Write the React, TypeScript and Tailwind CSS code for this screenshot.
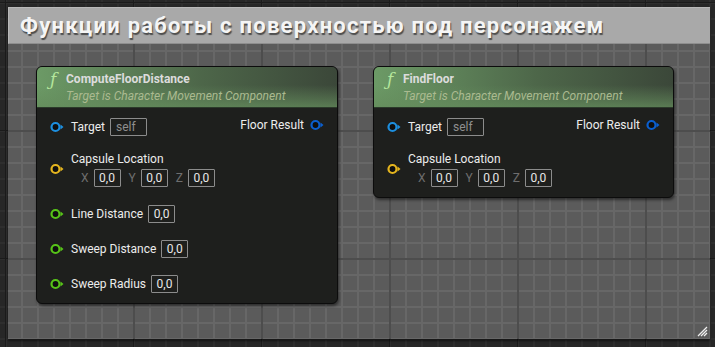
import React from "react";

// --- pins ---
const Pin: React.FC<{ color: string }> = ({ color }) => (
  <svg width="14" height="12" viewBox="0 0 14 12" className="shrink-0">
    <circle cx="5.5" cy="6" r="4" fill="#0f0f0f" stroke={color} strokeWidth="2.2" />
    <polygon points="10.5,3.5 13.5,6 10.5,8.5" fill={color} />
  </svg>
);

const ValueBox: React.FC<{ value: string; wide?: boolean }> = ({ value, wide }) => (
  <span
    className={`inline-flex items-center justify-center h-[18px] border border-[#8c8c8c] rounded-[1px] text-[12px] ${
      wide ? "w-[37px] justify-start pl-[5px] text-[#8f8f8f]" : "w-[27px] text-[#e8e8e8]"
    }`}
  >
    {value}
  </span>
);

const VectorInput = () => (
  <div className="flex items-center gap-[5px] pl-[11px] text-[12px] text-[#6e6e6e]">
    <span>X</span>
    <ValueBox value="0,0" />
    <span className="ml-[3px]">Y</span>
    <ValueBox value="0,0" />
    <span className="ml-[3px]">Z</span>
    <ValueBox value="0,0" />
  </div>
);

const FloatRow: React.FC<{ label: string }> = ({ label }) => (
  <div className="flex items-center h-[35px]">
    <Pin color="#57c418" />
    <span className="ml-[7px] mr-[5px]">{label}</span>
    <ValueBox value="0,0" />
  </div>
);

interface NodeProps {
  title: string;
  width: string;
  extraPins?: boolean;
}

const FunctionNode: React.FC<NodeProps> = ({ title, width, extraPins }) => (
  <div
    className={`${width} rounded-[6px] border border-[#0c0c0c] bg-[#1e1f1d] shadow-[1px_2px_3px_rgba(0,0,0,0.5)] overflow-hidden`}
  >
    <div className="h-[41px] pl-[12px] pt-[3px] bg-[linear-gradient(to_bottom,rgba(0,0,0,0)_45%,rgba(100,140,92,0.75)),linear-gradient(to_right,#6c9a66,#4d6649_55%,#3b4739)] border-b border-[#2b3a2a]">
      <div className="flex items-center h-[18px]">
        <span className="w-[17px] pl-[1px] text-[#b4e69c] italic text-[17px] leading-none font-['DejaVu_Serif',serif]">
          ƒ
        </span>
        <span className="font-bold text-[12px] text-[#dcdcdc]">{title}</span>
      </div>
      <div className="pl-[17px] italic text-[12px] leading-[17px] text-[#abba90]">
        Target is Character Movement Component
      </div>
    </div>
    <div className="pl-[13px] pr-[13px] text-[12px] text-[#ececec]">
      <div className="flex items-center justify-between pt-[10px]">
        <div className="flex items-center">
          <Pin color="#1d8fdf" />
          <span className="ml-[7px] mr-[5px]">Target</span>
          <ValueBox value="self" wide />
        </div>
        <div className="flex items-center gap-[6px] -mt-[5px]">
          <span>Floor Result</span>
          <Pin color="#0b5fcf" />
        </div>
      </div>
      <div className="flex items-center mt-[15px]">
        <Pin color="#e5b51e" />
        <div className="ml-[7px]">
          <div className="leading-[16px]">Capsule Location</div>
          <div className="-ml-[1px] mt-[2px]">
            <VectorInput />
          </div>
        </div>
      </div>
      {extraPins ? (
        <div className="pt-[9px] pb-[2px]">
          <FloatRow label="Line Distance" />
          <FloatRow label="Sweep Distance" />
          <FloatRow label="Sweep Radius" />
        </div>
      ) : (
        <div className="h-[10px]" />
      )}
    </div>
  </div>
);

export default function App() {
  return (
    <div className="w-[715px] h-[347px] overflow-hidden pt-[7px] pl-[8px] bg-[#272727] bg-[linear-gradient(to_right,#1b1b1b_1px,transparent_1px),linear-gradient(to_bottom,#1b1b1b_1px,transparent_1px),linear-gradient(to_right,#2e2e2e_2px,transparent_2px),linear-gradient(to_bottom,#2e2e2e_2px,transparent_2px)] bg-[size:128px_128px,128px_128px,16px_16px,16px_16px] bg-[position:5px_2px] font-['Roboto',sans-serif]">
      <div className="w-[702px] h-[332px] flex flex-col shadow-[0_2px_2px_rgba(0,0,0,0.5)]">
        <div className="h-[37px] shrink-0 bg-[#a9a9a9] border-t border-l border-[#b9b9b9] border-b border-b-[#8e8e8e] pl-[11px] flex items-center">
          <span className="text-[22px] font-bold text-[#f5f5f5] tracking-[1.25px] [text-shadow:1px_2px_1px_rgba(0,0,0,0.55)] leading-none">
            Функции работы с поверхностью под персонажем
          </span>
        </div>
        <div className="relative flex-1 bg-[#5b5b5b] bg-[linear-gradient(to_right,#4d4d4d_2px,transparent_2px),linear-gradient(to_bottom,#4d4d4d_2px,transparent_2px),linear-gradient(to_right,#676767_2px,transparent_2px),linear-gradient(to_bottom,#676767_2px,transparent_2px)] bg-[size:128px_128px,128px_128px,16px_16px,16px_16px] bg-[position:125px_86px,125px_86px,13px_6px,13px_6px] flex items-start pl-[28px] pt-[22px] gap-[35px]">
          <FunctionNode title="ComputeFloorDistance" width="w-[302px]" extraPins />
          <FunctionNode title="FindFloor" width="w-[301px]" />
          <svg
            width="12"
            height="12"
            viewBox="0 0 12 12"
            className="absolute right-[2px] bottom-[2px]"
          >
            <path d="M11 2 L2 11 M11 5 L5 11 M11 8 L8 11" stroke="#f0f0f0" strokeWidth="1.3" />
          </svg>
        </div>
      </div>
    </div>
  );
}
